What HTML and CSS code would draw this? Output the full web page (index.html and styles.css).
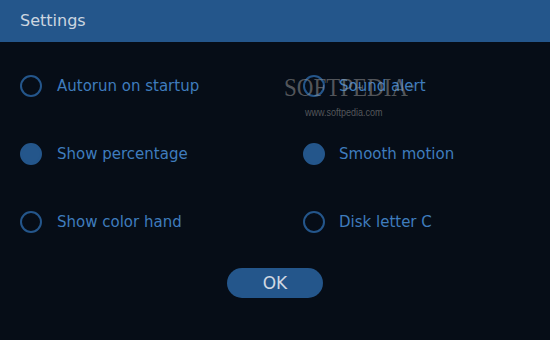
FILE: index.html
```html
<!DOCTYPE html>
<html lang="en">
<head>
    <meta charset="UTF-8">
    <title>Settings</title>
    <link rel="stylesheet" href="styles.css">
</head>
<body>

    <div class="window">
        <div class="title-bar">Settings</div>

        <div class="options">
            <label class="option"><span class="radio"></span>Autorun on startup</label>
            <label class="option"><span class="radio"></span>Sound alert</label>
            <label class="option"><span class="radio checked"></span>Show percentage</label>
            <label class="option"><span class="radio checked"></span>Smooth motion</label>
            <label class="option"><span class="radio"></span>Show color hand</label>
            <label class="option"><span class="radio"></span>Disk letter C</label>
        </div>

        <div class="actions">
            <button class="ok">OK</button>
        </div>

        <!-- watermark -->
        <div class="watermark">
            <div class="wm-logo">SOFTPEDIA<span class="tm">™</span></div>
            <div class="wm-url">www.softpedia.com</div>
        </div>
    </div>

</body>
</html>
```

FILE: styles.css
```css
body {
    margin: 0;
    padding: 0;
    background-color: #060d17;
    font-family: "DejaVu Sans", Verdana, sans-serif;
}
.window {
    position: relative;
    width: 550px;
    height: 340px;
    overflow: hidden;
}
.title-bar {
    height: 42px;
    line-height: 42px;
    padding-left: 20px;
    background-color: #24568b;
    color: #cdd6e0;
    font-size: 16px;
}
.options {
    display: grid;
    grid-template-columns: 283px 1fr;
    row-gap: 46px;
    padding: 33px 0 0 20px;
}
.option {
    display: flex;
    align-items: center;
    height: 22px;
    color: #3f7cbd;
    font-size: 15px;
    cursor: pointer;
}
.option:nth-child(even) .radio {
    margin-right: 14px;
}
.radio {
    width: 18px;
    height: 18px;
    border: 2px solid #24568b;
    border-radius: 50%;
    margin-right: 15px;
    flex-shrink: 0;
}
.radio.checked {
    background-color: #24568b;
}
.actions {
    display: flex;
    justify-content: center;
    margin-top: 35px;
}
.ok {
    width: 96px;
    height: 30px;
    border: none;
    border-radius: 15px;
    background-color: #24568b;
    color: #d0d8e2;
    font-family: "DejaVu Sans", Verdana, sans-serif;
    font-size: 17px;
    cursor: pointer;
}
.watermark {
    position: absolute;
    left: 284px;
    top: 75px;
    color: rgba(150, 150, 150, 0.55);
    pointer-events: none;
}
.wm-logo {
    font-family: "Liberation Serif", serif;
    font-size: 25px;
    line-height: 26px;
    transform: scaleX(0.92);
    transform-origin: left;
}
.tm {
    font-size: 7px;
    vertical-align: top;
    font-family: "Liberation Sans", sans-serif;
}
.wm-url {
    margin: 6px 0 0 21px;
    font-family: "Liberation Sans", sans-serif;
    font-size: 10px;
    transform: scaleX(0.9);
    transform-origin: left;
}
```
